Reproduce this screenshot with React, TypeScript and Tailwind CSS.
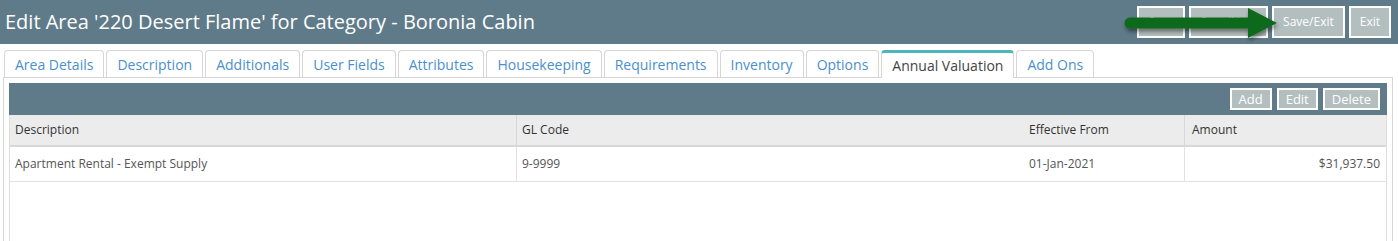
import React from 'react'

const tabs = [
  'Area Details',
  'Description',
  'Additionals',
  'User Fields',
  'Attributes',
  'Housekeeping',
  'Requirements',
  'Inventory',
  'Options',
  'Annual Valuation',
  'Add Ons',
]

const rows = [
  {
    description: 'Apartment Rental - Exempt Supply',
    glCode: '9-9999',
    effectiveFrom: '01-Jan-2021',
    amount: '$31,937.50',
  },
]

function HeaderButton({ label }: { label: string }) {
  return (
    <button className="h-[32px] border-2 border-white bg-[#b3bebe] px-[9px] text-[12px] text-white">
      {label}
    </button>
  )
}

function ToolButton({ label }: { label: string }) {
  return (
    <button className="h-[22px] border-2 border-white bg-[#b3bebe] px-[7px] text-[13px] leading-none text-white">
      {label}
    </button>
  )
}

export default function App() {
  const active = 'Annual Valuation'

  return (
    <div className="relative h-[241px] w-[1398px] overflow-hidden bg-white font-['Open_Sans',sans-serif]">
      {/* Page header */}
      <div className="flex h-[44px] items-center justify-between bg-[#5f7b89] pl-[5px] pr-[7px]">
        <h1 className="text-[20px] leading-none text-white">
          Edit Area '220 Desert Flame' for Category - Boronia Cabin
        </h1>
        <div className="flex gap-[4px]">
          <HeaderButton label="Save" />
          <HeaderButton label="Save/Next" />
          <HeaderButton label="Save/Exit" />
          <HeaderButton label="Exit" />
        </div>
      </div>

      {/* Callout arrow */}
      <svg
        className="absolute left-[1118px] top-[4px]"
        width="166"
        height="42"
        viewBox="0 0 166 42"
      >
        <defs>
          <filter id="sh" x="-10%" y="-30%" width="120%" height="160%">
            <feDropShadow dx="1" dy="3" stdDeviation="2" floodColor="#000" floodOpacity="0.45" />
          </filter>
        </defs>
        <g filter="url(#sh)">
          <path d="M12 13.5 H130 V4 L159 19 L130 34 V24.5 H12 A5.5 5.5 0 0 1 12 13.5 Z" fill="#116b1c" />
        </g>
      </svg>

      {/* Tabs */}
      <div className="mt-[6px] flex items-end gap-[2px] pl-[4px]">
        {tabs.map((t) =>
          t === active ? (
            <div
              key={t}
              className="relative z-10 -mb-px flex h-[28px] items-center rounded-t-[4px] border border-t-[3px] border-b-0 border-[#d6d6d6] border-t-[#4db6bd] bg-white px-[10px] text-[14px] text-[#444]"
            >
              {t}
            </div>
          ) : (
            <div
              key={t}
              className="flex h-[27px] items-center rounded-t-[4px] border border-b-0 border-[#d6d6d6] px-[10px] text-[14px] text-[#4a90cc]"
            >
              {t}
            </div>
          )
        )}
      </div>

      {/* Panel */}
      <div className="ml-[3px] mr-[5px] h-[200px] border border-[#d6d6d6] px-[5px] pt-[5px]">
        <div className="flex h-[32px] items-center justify-end gap-[5px] bg-[#5f7b89] pr-[7px]">
          <ToolButton label="Add" />
          <ToolButton label="Edit" />
          <ToolButton label="Delete" />
        </div>

        <div className="h-[160px] border-x border-[#dddddd] text-[12px]">
          <div className="grid h-[32px] grid-cols-[507px_507px_161px_1fr] border-b-2 border-[#d8d8d8] bg-[#ececec] text-[#333]">
            <div className="flex items-center border-r border-[#d8d8d8] px-[5px]">Description</div>
            <div className="flex items-center px-[5px]">GL Code</div>
            <div className="flex items-center border-r border-[#d8d8d8] px-[5px]">Effective From</div>
            <div className="flex items-center px-[7px]">Amount</div>
          </div>
          {rows.map((r) => (
            <div
              key={r.description}
              className="grid h-[35px] grid-cols-[507px_507px_161px_1fr] border-b border-[#e2e2e2] text-[#555]"
            >
              <div className="flex items-center border-r border-[#e2e2e2] px-[5px]">{r.description}</div>
              <div className="flex items-center px-[5px]">{r.glCode}</div>
              <div className="flex items-center border-r border-[#e2e2e2] px-[5px]">{r.effectiveFrom}</div>
              <div className="flex items-center justify-end px-[6px]">{r.amount}</div>
            </div>
          ))}
        </div>
      </div>
    </div>
  )
}
